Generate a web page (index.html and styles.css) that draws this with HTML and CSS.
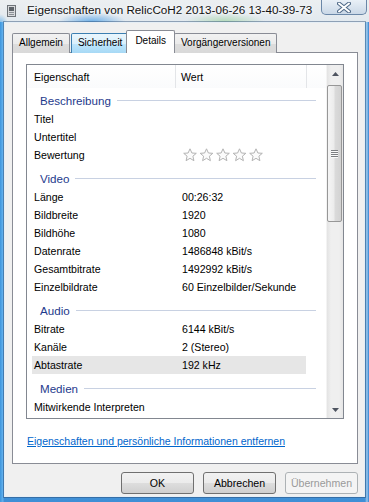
FILE: index.html
```html
<!DOCTYPE html>
<html lang="de">
<head>
    <meta charset="UTF-8">
    <title>Eigenschaften von RelicCoH2 2013-06-26 13-40-39-73</title>
    <link rel="stylesheet" href="styles.css">
</head>
<body>
    <div class="window">
        <!-- Title bar -->
        <div class="titlebar">
            <svg class="app-icon" width="9" height="12" viewBox="0 0 9 12">
                <rect x="0.5" y="0.5" width="8" height="11" fill="#d8dadc" stroke="#6f7479"/>
                <rect x="2" y="2" width="5" height="4" fill="#5d6369"/>
                <rect x="2" y="7" width="5" height="1" fill="#8b9096"/>
                <rect x="2" y="9" width="5" height="1" fill="#8b9096"/>
            </svg>
            <span class="title">Eigenschaften von RelicCoH2 2013-06-26 13-40-39-73</span>
            <div class="close">
                <svg width="14" height="11" viewBox="0 0 14 11">
                    <path d="M2 1.5 L12 9.5 M12 1.5 L2 9.5" stroke="#506a88" stroke-width="4" stroke-linecap="round"/>
                    <path d="M2 1.5 L12 9.5 M12 1.5 L2 9.5" stroke="#ffffff" stroke-width="2" stroke-linecap="round"/>
                </svg>
            </div>
        </div>

        <div class="frame">
            <div class="client">
                <!-- Tabs -->
                <div class="tabs">
                    <div class="tab">Allgemein</div>
                    <div class="tab hover">Sicherheit</div>
                    <div class="tab active">Details</div>
                    <div class="tab">Vorgängerversionen</div>
                </div>

                <div class="panel">
                    <div class="listbox">
                        <div class="list">
                            <div class="header">
                                <div class="col col-name">Eigenschaft</div>
                                <div class="col col-value">Wert</div>
                                <div class="col col-rest"></div>
                            </div>

                            <div class="group first"><span>Beschreibung</span><i></i></div>
                            <div class="row"><span class="name">Titel</span><span class="value"></span></div>
                            <div class="row"><span class="name">Untertitel</span><span class="value"></span></div>
                            <div class="row">
                                <span class="name">Bewertung</span>
                                <span class="value">
                                    <svg class="stars" width="82" height="14" viewBox="0 0 82 14">
                                        <defs>
                                            <polygon id="star" points="7,0.8 8.9,5 13.3,5.3 9.9,8.2 10.9,12.7 7,10.3 3.1,12.7 4.1,8.2 0.7,5.3 5.1,5" fill="#fbfbfb" stroke="#b3b3b3" stroke-width="1" stroke-linejoin="round"/>
                                        </defs>
                                        <use href="#star" x="0"/>
                                        <use href="#star" x="16.5"/>
                                        <use href="#star" x="33"/>
                                        <use href="#star" x="49.5"/>
                                        <use href="#star" x="66"/>
                                    </svg>
                                </span>
                            </div>

                            <div class="group"><span>Video</span><i></i></div>
                            <div class="row"><span class="name">Länge</span><span class="value">00:26:32</span></div>
                            <div class="row"><span class="name">Bildbreite</span><span class="value">1920</span></div>
                            <div class="row"><span class="name">Bildhöhe</span><span class="value">1080</span></div>
                            <div class="row"><span class="name">Datenrate</span><span class="value">1486848 kBit/s</span></div>
                            <div class="row"><span class="name">Gesamtbitrate</span><span class="value">1492992 kBit/s</span></div>
                            <div class="row"><span class="name">Einzelbildrate</span><span class="value">60 Einzelbilder/Sekunde</span></div>

                            <div class="group"><span>Audio</span><i></i></div>
                            <div class="row"><span class="name">Bitrate</span><span class="value">6144 kBit/s</span></div>
                            <div class="row"><span class="name">Kanäle</span><span class="value">2 (Stereo)</span></div>
                            <div class="row selected"><span class="name">Abtastrate</span><span class="value">192 kHz</span></div>

                            <div class="group"><span>Medien</span><i></i></div>
                            <div class="row"><span class="name">Mitwirkende Interpreten</span><span class="value"></span></div>
                        </div>

                        <!-- Scrollbar -->
                        <div class="scrollbar">
                            <div class="sb-btn">
                                <svg width="7" height="4" viewBox="0 0 7 4"><polygon points="0,4 3.5,0 7,4" fill="#4e5460"/></svg>
                            </div>
                            <div class="sb-thumb">
                                <span class="grip"></span>
                                <span class="grip"></span>
                                <span class="grip"></span>
                                <span class="grip"></span>
                            </div>
                            <div class="sb-track"></div>
                            <div class="sb-btn">
                                <svg width="7" height="4" viewBox="0 0 7 4"><polygon points="0,0 3.5,4 7,0" fill="#4e5460"/></svg>
                            </div>
                        </div>
                    </div>

                    <a class="link" href="#">Eigenschaften und persönliche Informationen entfernen</a>
                </div>

                <!-- Dialog buttons -->
                <div class="buttons">
                    <button class="btn">OK</button>
                    <button class="btn">Abbrechen</button>
                    <button class="btn disabled">Übernehmen</button>
                </div>
            </div>
        </div>
    </div>
</body>
</html>
```

FILE: styles.css
```css
* {
    margin: 0;
    padding: 0;
    box-sizing: border-box;
}

html, body {
    width: 369px;
    height: 502px;
    overflow: hidden;
}

body {
    font-family: "Liberation Sans", Arial, sans-serif;
    font-size: 10.6px;
    color: #000;
}

.window {
    width: 369px;
    height: 502px;
    display: flex;
    flex-direction: column;
}

/* Title bar (Aero glass) */
.titlebar {
    height: 22px;
    display: flex;
    align-items: flex-start;
    background:
        radial-gradient(ellipse 34px 10px at 92px 22px, rgba(58, 150, 228, 0.7), transparent),
        radial-gradient(ellipse 40px 8px at 225px 21px, rgba(140, 205, 140, 0.5), transparent),
        radial-gradient(ellipse 8px 10px at 0 24px, rgba(70, 160, 230, 0.7), transparent),
        linear-gradient(#eceff1, #e2e9ef);
}

.app-icon {
    margin: 5px 0 0 7px;
    flex-shrink: 0;
}

.title {
    margin-left: 11px;
    font-size: 11.7px;
    line-height: 20px;
    color: #111;
    white-space: nowrap;
    text-shadow: 0 0 6px #fff, 0 0 3px #fff;
}

.close {
    margin-left: auto;
    margin-right: 2px;
    width: 46px;
    height: 15px;
    display: flex;
    align-items: center;
    justify-content: center;
    border: 1px solid #6a87a8;
    border-top: none;
    border-radius: 0 0 5px 5px;
    background: linear-gradient(#e9f0f7, #cad8e7);
}

/* Window frame */
.frame {
    flex: 1;
    padding: 0 4px 5px 4px;
    background:
        linear-gradient(90deg, #3d95dc 0, #64b2ee 3px, transparent 4px),
        linear-gradient(270deg, #2d7fcf 0, #9cc8ec 2px, transparent 4px),
        linear-gradient(#7fbcea, #3f8fd6);
}

.client {
    height: 100%;
    background: #f0f0f0;
    border: 1px solid #e6eef5;
    box-shadow: 0 0 0 1px rgba(40, 70, 110, 0.45);
    display: flex;
    flex-direction: column;
}

/* Tabs */
.tabs {
    display: flex;
    align-items: flex-end;
    padding: 8px 0 0 7px;
    height: 29px;
    position: relative;
    z-index: 1;
}

.tab {
    height: 20px;
    padding: 0 6px;
    margin-right: -1px;
    line-height: 18px;
    font-size: 10px;
    border: 1px solid #898c95;
    border-bottom: none;
    border-radius: 2px 2px 0 0;
    background: linear-gradient(#f2f2f2, #ebebeb 50%, #dddddd 51%, #d9d9d9);
    white-space: nowrap;
    margin-bottom: -1px;
}

.tab.hover {
    margin-left: 2px;
    border-color: #3c7fb1;
    background: linear-gradient(#eaf6fd, #d9f0fc 50%, #bee6fd 51%, #a7d9f5);
}

.tab.active {
    height: 23px;
    margin: 0 -1px -1px -2px;
    padding: 0 8px;
    line-height: 20px;
    background: #fff;
    position: relative;
    z-index: 2;
}

.tab.active + .tab {
    margin-left: 0;
}

/* Tab panel */
.panel {
    margin: 0 6px 0 7px;
    height: 412px;
    background: #fff;
    border: 1px solid #898c95;
    padding: 11px 0 0 13px;
}

.listbox {
    width: 318px;
    height: 355px;
    border: 1px solid #828790;
    display: flex;
}

.list {
    flex: 1;
    overflow: hidden;
}

.header {
    display: flex;
    height: 23px;
    line-height: 24px;
    background: linear-gradient(#ffffff, #fafbfc);
}

.col {
    border-right: 1px solid #e3e5e8;
    white-space: nowrap;
}

.col-name {
    width: 149px;
    padding-left: 7px;
}

.col-value {
    width: 131px;
    padding-left: 5px;
}

.col-rest {
    flex: 1;
    border-right: none;
}

.group {
    height: 24px;
    padding: 4px 10px 0 13px;
    display: flex;
    align-items: center;
    color: #1e3a8c;
    font-size: 11.6px;
}

.group.first {
    height: 22px;
    padding-top: 2px;
}

.group i {
    flex: 1;
    height: 1px;
    margin-left: 6px;
    background: #c8d1e2;
}

.row {
    display: flex;
    width: 274px;
    height: 18px;
    margin-left: 5px;
    line-height: 18px;
    white-space: nowrap;
}

.row.selected {
    background: #e6e6e6;
}

.row .name {
    width: 150px;
    padding-left: 2px;
}

.row .value {
    display: flex;
    align-items: center;
}

.stars {
    margin-left: 1px;
}

/* Scrollbar */
.scrollbar {
    width: 17px;
    display: flex;
    flex-direction: column;
    background: linear-gradient(90deg, #e3e3e3, #efefef 25%, #efefef 75%, #e6e6e6);
    border-left: 1px solid #f3f3f3;
}

.sb-btn {
    height: 17px;
    display: flex;
    align-items: center;
    justify-content: center;
}

.sb-thumb {
    margin: 3px 1px 0 0;
    height: 137px;
    border: 1px solid #979797;
    border-radius: 2px;
    background: linear-gradient(90deg, #f5f5f5, #ececec 45%, #dadada 55%, #d2d2d2);
    display: flex;
    flex-direction: column;
    align-items: center;
    justify-content: center;
    gap: 1px;
}

.grip {
    width: 7px;
    height: 1px;
    background: #7d7f82;
    box-shadow: 0 1px 0 #fafafa;
}

.sb-track {
    flex: 1;
}

.link {
    display: block;
    margin: 15px 0 0 1px;
    color: #0066cc;
    text-decoration: underline;
    line-height: 14px;
    white-space: nowrap;
    font-size: 10.5px;
}

/* Dialog buttons */
.buttons {
    display: flex;
    justify-content: flex-end;
    gap: 9px;
    padding: 8px 6px 0 0;
}

.btn {
    width: 73px;
    height: 22px;
    border: 1px solid #707070;
    border-radius: 3px;
    background: linear-gradient(#f2f2f2, #ebebeb 50%, #dddddd 51%, #cfcfcf);
    font-family: inherit;
    font-size: 10.6px;
    color: #000;
}

.btn.disabled {
    border-color: #adb2b5;
    background: #f4f4f4;
    color: #9a9a9a;
}
```
